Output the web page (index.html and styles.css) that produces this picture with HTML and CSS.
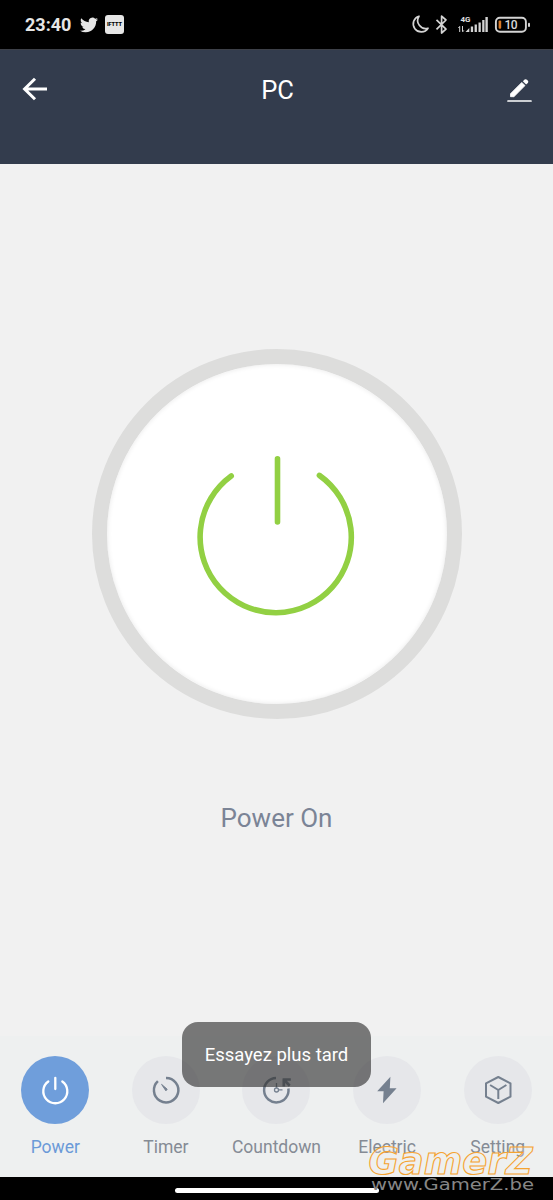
FILE: index.html
```html
<!DOCTYPE html>
<html lang="en">
<head>
<meta charset="utf-8">
<title>PC</title>
<link rel="stylesheet" href="styles.css">
</head>
<body>
<div class="screen">
  <div class="status">
    <div class="status-left">
      <span class="clock">23:40</span>
      <svg class="bird" viewBox="0 0 24 24" width="18" height="18"><path fill="#e6e6e6" d="M23.953 4.57a10 10 0 01-2.825.775 4.958 4.958 0 002.163-2.723c-.951.555-2.005.959-3.127 1.184a4.92 4.92 0 00-8.384 4.482C7.69 8.095 4.067 6.13 1.64 3.162a4.822 4.822 0 00-.666 2.475c0 1.71.87 3.213 2.188 4.096a4.904 4.904 0 01-2.228-.616v.06a4.923 4.923 0 003.946 4.827 4.996 4.996 0 01-2.212.085 4.936 4.936 0 004.604 3.417 9.867 9.867 0 01-6.102 2.105c-.39 0-.779-.023-1.17-.067a13.995 13.995 0 007.557 2.209c9.053 0 13.998-7.496 13.998-13.985 0-.21 0-.42-.015-.63A9.935 9.935 0 0024 4.59z"/></svg>
      <span class="ifttt">IFTTT</span>
    </div>
    <svg class="status-right" viewBox="0 0 122 26" width="122" height="26">
      <g fill="none" stroke="#d4d4d4" stroke-width="1.7" stroke-linejoin="round">
        <path d="M8 4.200A8 8 0 1 0 17 16.200A8 8 0 0 1 8 4.200Z"/>
        <path d="M25.500 7.900L35 17.100L30.600 21V4.200L35 8L25.500 17.400"/>
      </g>
      <text class="net" x="49.500" y="10" textLength="10" lengthAdjust="spacingAndGlyphs">4G</text>
      <path d="M48.700 20V14.500M47.400 16l1.300-1.600M51.500 14v5.500M51.500 20l1.300-1.600" stroke="#d4d4d4" stroke-width="1" fill="none"/>
      <path fill="#d4d4d4" d="M54.500 20L58.300 16V20ZM59.800 14.500h2.300v5.500h-2.300zM63.600 12.500h2.300v7.500h-2.300zM67.500 10.500h2.300v9.500h-2.300zM71.200 8h2.300v12h-2.300zM74.400 5h2.400v15h-2.400z"/>
      <rect x="84.900" y="5.700" width="30" height="14" rx="4" fill="none" stroke="#d4d4d4" stroke-width="1.900"/>
      <rect x="87.600" y="8.600" width="2.600" height="8.200" rx="1" fill="#d97a26"/>
      <rect x="117" y="10.700" width="2" height="4.200" rx="1" fill="#d4d4d4"/>
      <text class="batt" x="93.500" y="17" textLength="13">10</text>
    </svg>
  </div>
  <div class="header">
    <svg viewBox="0 0 26 26" width="26" height="26"><path d="M13 1.800L2.600 12L13 22.200M3 12H25" fill="none" stroke="#fff" stroke-width="3"/></svg>
    <h1 class="title">PC</h1>
    <svg viewBox="0 0 26 28" width="26" height="28"><path d="M3.500 20.700V17.700L14.800 6.400L18 9.600L6.900 20.700Z" fill="#fff" stroke="#fff" stroke-width=".8" stroke-linejoin="round"/><path d="M15.900 5.300L17.600 3.600Q18.800 2.700 20 3.800L20.900 4.800Q21.800 5.900 20.900 6.900L19.100 8.600Z" fill="#fff"/><path d="M1 25H24" stroke="#fff" stroke-width="1.700" stroke-linecap="round"/></svg>
  </div>
  <div class="content">
    <div class="switch">
      <svg viewBox="0 0 340 340" width="340" height="340" fill="none" stroke="#92d043" stroke-width="5.600" stroke-linecap="round"><path d="M124.200 112A75.600 75.600 0 1 0 212.400 111.400M170.500 94.700V158"/></svg>
    </div>
    <div class="state">Power On</div>
  </div>
  <div class="nav">
    <div class="item active">
      <div class="disc"><svg viewBox="0 0 32 32" width="32" height="32" fill="none" stroke="#fff" stroke-width="2.300" stroke-linecap="round"><path d="M9.300 7.500A12 12 0 1 0 23.300 7.500M16.300 3.800V15"/></svg></div>
      <span class="label">Power</span>
    </div>
    <div class="item">
      <div class="disc"><svg viewBox="0 0 32 32" width="32" height="32" fill="none" stroke="#75808f" stroke-width="2.500"><path d="M7.900 7.200A12.200 12.200 0 1 0 16 4"/><path d="M11.600 10.400L17.200 15.200L15.900 16.800Z" fill="#75808f" stroke-width="1"/></svg></div>
      <span class="label">Timer</span>
    </div>
    <div class="item">
      <div class="disc"><svg viewBox="0 0 32 32" width="32" height="32" fill="none" stroke="#75808f" stroke-width="2.500"><path d="M16 4A12.200 12.200 0 1 0 28.400 14.500"/><path d="M22.600 5.500H30.800M23.800 5.300V12.600M24.300 6L29.700 11.700" stroke-width="2.700"/><circle cx="16.500" cy="16" r="2" stroke-width="1.300"/><path d="M16.500 9V14M18.500 15.900H22.500" stroke-width="1.300"/></svg></div>
      <span class="label">Countdown</span>
    </div>
    <div class="item">
      <div class="disc"><svg viewBox="0 0 32 32" width="32" height="32"><path d="M19.400 2.800L6.200 17.200H12.600L12 29.300L25.600 14.300H18.800Z" fill="#75808f"/></svg></div>
      <span class="label">Electric</span>
    </div>
    <div class="item">
      <div class="disc"><svg viewBox="0 0 32 32" width="32" height="32" fill="none" stroke="#75808f" stroke-width="2" stroke-linejoin="round"><path d="M16.300 3L28.500 9.300V22.700L16.300 29L4 22.700V9.300ZM8.100 11L16.300 16L24.400 11M16.300 16V25"/></svg></div>
      <span class="label">Setting</span>
    </div>
  </div>
  <div class="gesture"><div class="pill"></div></div>
  <div class="toast">Essayez plus tard</div>
  <svg class="watermark" viewBox="0 0 190 60" width="190" height="60">
    <text class="mark-name" x="7.500" y="33.500" textLength="164" lengthAdjust="spacingAndGlyphs">GamerZ</text>
    <text class="mark-url" x="10" y="50" textLength="163" lengthAdjust="spacingAndGlyphs">www.GamerZ.be</text>
  </svg>
</div>
</body>
</html>
```

FILE: styles.css
```css
* { box-sizing: border-box; }
body { margin: 0; font-family: Roboto, sans-serif; }
svg { display: block; flex: none; }
.screen {
  position: relative;
  display: flex;
  flex-direction: column;
  width: 553px;
  height: 1200px;
  overflow: hidden;
  background: #f1f1f1;
}
.status {
  display: flex;
  justify-content: space-between;
  height: 49px;
  padding: 12px 20px 0 25px;
  background: #000;
}
.status-left {
  display: flex;
  align-items: center;
  height: 25px;
}
.clock {
  width: 55px;
  color: #e6e6e6;
  font-size: 18px;
  font-weight: 700;
  line-height: 26px;
  white-space: nowrap;
}
.ifttt {
  display: flex;
  align-items: center;
  justify-content: center;
  width: 19px;
  height: 19px;
  margin-left: 7px;
  border-radius: 3px;
  background: #e6e6e6;
  color: #000;
  font-size: 5.5px;
  font-weight: 900;
  line-height: 1;
}
.net { fill: #e0e0e0; font-size: 8px; font-weight: 700; }
.batt { fill: #d8d8d8; font-size: 12px; font-weight: 500; }
.header {
  display: flex;
  justify-content: space-between;
  align-items: center;
  height: 115px;
  padding: 0 20px 34px 22px;
  background: #333c4d;
  border-top: 1px solid #3d4048;
}
.title {
  margin: 0;
  color: #fff;
  font-size: 25.5px;
  font-weight: 400;
  line-height: 30px;
}
.content {
  display: flex;
  flex: 1;
  flex-direction: column;
  align-items: center;
  padding-top: 185px;
}
.switch {
  width: 370px;
  height: 370px;
  border: 15px solid #dddddc;
  border-radius: 50%;
  background: #fff;
}
.switch svg { border-radius: 50%; box-shadow: inset 0 0 5px #e8e8e8; }
.state {
  margin-top: 83px;
  color: #7b8496;
  font-size: 26px;
  line-height: 32px;
}
.nav {
  display: grid;
  grid-template-columns: repeat(5, 1fr);
  height: 141px;
  padding-top: 20px;
  background: #eef0f0;
}
.item {
  display: flex;
  flex-direction: column;
  align-items: center;
  gap: 12px;
  color: #858b95;
}
.disc {
  display: flex;
  align-items: center;
  justify-content: center;
  width: 68px;
  height: 68px;
  border-radius: 50%;
  background: #e6e7ea;
}
.active { color: #6b9ad8; }
.active .disc { background: #6f9edb; }
.label { font-size: 17.5px; line-height: 22px; }
.gesture {
  display: flex;
  justify-content: center;
  height: 23px;
  padding-top: 11px;
  background: #000;
}
.pill { width: 204px; height: 5px; border-radius: 3px; background: #fff; }
.toast {
  position: absolute;
  left: 182px;
  top: 1022px;
  width: 189px;
  height: 65px;
  border-radius: 16px;
  background: rgba(50, 50, 50, .64);
  color: #fff;
  font-size: 18.5px;
  line-height: 67px;
  text-align: center;
}
.watermark { position: absolute; left: 361px; top: 1140px; }
.mark-name {
  fill: #f3f0e8;
  fill-opacity: .25;
  stroke: #f5a331;
  stroke-width: 1.1px;
  font-family: "DejaVu Sans", sans-serif;
  font-size: 37px;
  font-weight: 700;
  font-style: oblique;
}
.mark-url {
  fill: #868686;
  font-family: "DejaVu Sans", sans-serif;
  font-size: 15px;
}
```
